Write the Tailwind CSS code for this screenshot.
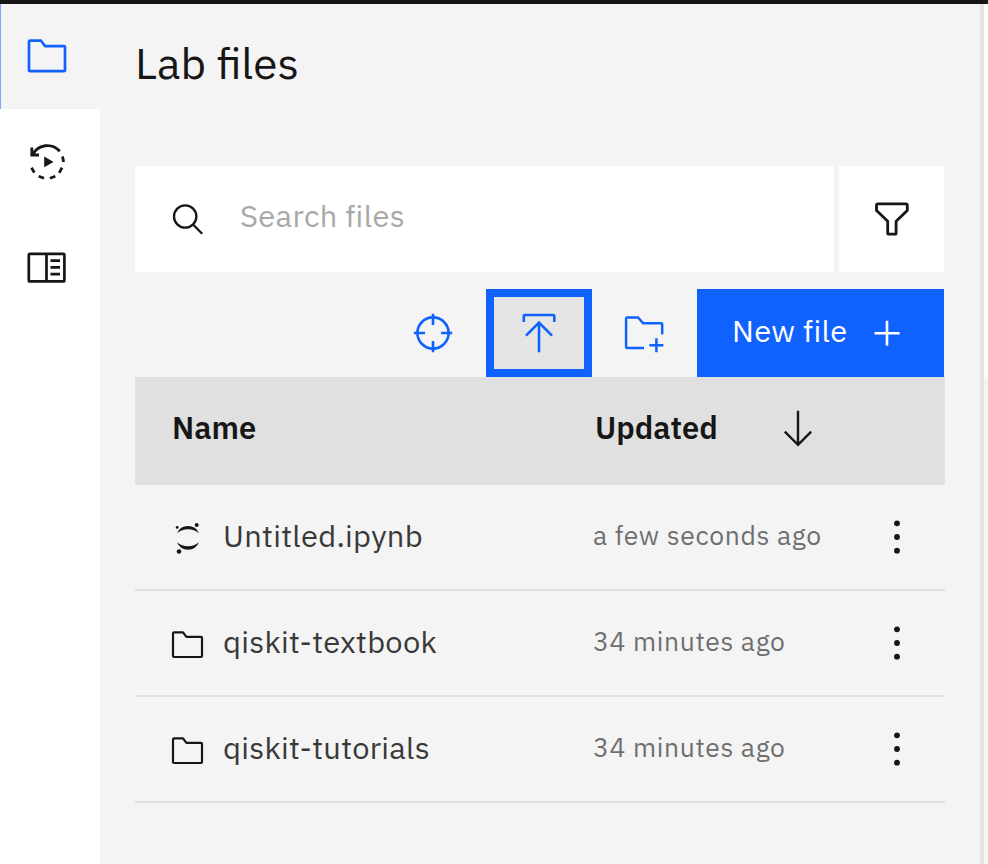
<!DOCTYPE html>
<html lang="en">
<head>
<meta charset="utf-8">
<title>Lab files</title>
<script src="https://cdn.jsdelivr.net/npm/@tailwindcss/browser@4"></script>
</head>
<body class="w-[988px] h-[864px] overflow-hidden bg-[#f4f4f4] font-['IBM_Plex_Sans',Roboto,sans-serif] text-[#161616]">
<div class="flex flex-col h-[864px]">
  <div class="h-1 bg-[#161616] shrink-0"></div>
  <div class="flex flex-1 min-h-0">
    <nav class="w-[100px] shrink-0 bg-white flex flex-col">
      <a class="h-[105px] bg-[#f4f4f4] border-l border-[#78a9ff] pl-[23px] pt-[30px] text-[#0f62fe]">
        <svg class="block" width="46" height="44" viewBox="24 34 46 44" fill="none" stroke="currentColor" stroke-width="2.7" stroke-linejoin="round"><path d="M30 40.7H41L45.2 46.2H64Q65 46.2 65 47.2V70.2Q65 71.2 64 71.2H30Q29 71.2 29 70.2V41.7Q29 40.7 30 40.7Z"/></svg>
      </a>
      <a class="h-[106px] pl-6 pt-[31px]">
        <svg class="block" width="46" height="44" viewBox="24 140 46 44" fill="none" stroke="currentColor" stroke-width="2.8"><path d="M31.8 147.5V155H39M32.4 155A16.6 16.6 0 0 1 59.8 151.2M62.4 156.4Q63.4 159 63.4 162M62 167.6L59.3 172.8M55.3 176.2L50 178.2M44 178.2L38.7 176.2M34.3 172.6L31.5 167.8"/><path d="M44.2 156.6V167.2L53.6 162Z" fill="currentColor" stroke="none"/></svg>
      </a>
      <a class="h-[106px] pl-6 pt-[31px]">
        <svg class="block" width="46" height="44" viewBox="24 246 46 44" fill="none" stroke="currentColor" stroke-width="2.7"><rect x="28.8" y="253.8" width="35.6" height="27.6" rx="1.2"/><path d="M46.5 253.6V281.2M50.5 260.7H60M50.5 267.4H60M50.5 274.2H60"/></svg>
      </a>
    </nav>
    <main class="w-[880px] shrink-0 pl-[35px]">
      <h1 class="h-[162px] pt-[33px] text-[44px] leading-[52px]">Lab files</h1>
      <div class="flex gap-[5px] h-[106px]">
        <label class="w-[699px] bg-white flex items-center pl-[33px]">
          <svg class="block" width="40" height="40" viewBox="168 199 40 40" fill="none" stroke="currentColor" stroke-width="2.3"><circle cx="185.2" cy="216.5" r="11.2"/><path d="M193 224.5L202.2 233.8"/></svg>
          <span class="ml-8 pb-2 text-[30.9px] leading-[40px] text-[#a8a8a8] tracking-[0.33px]">Search files</span>
        </label>
        <button class="w-[105px] bg-white flex items-center justify-center">
          <svg class="block" width="41" height="40" viewBox="871.1 199 41 40" fill="none" stroke="currentColor" stroke-width="2.8" stroke-linejoin="round"><path d="M878 203.8H906Q907.4 203.8 907.4 205.2V210.6L896.2 221.3V233Q896.2 234.2 895 234.2H889Q887.8 234.2 887.8 233V221.3L876.6 210.6V205.2Q876.6 203.8 878 203.8Z"/></svg>
        </button>
      </div>
      <div class="flex mt-[17px] h-[88px] w-[809px] justify-end text-[#0f62fe]">
        <button class="w-[106px] flex items-center justify-center">
          <svg class="block" width="44" height="44" viewBox="411 311 44 44" fill="none" stroke="currentColor" stroke-width="2.6"><circle cx="433" cy="333" r="15.6"/><path d="M433 313.8V325M433 341V352.2M413.8 333H425M441 333H452.2"/></svg>
        </button>
        <button class="w-[106px] flex items-center justify-center border-8 border-[#0f62fe] bg-[#e5e5e5]">
          <svg class="block" width="44" height="44" viewBox="517 311 44 44" fill="none" stroke="currentColor" stroke-width="2.6"><path d="M523.8 322V316Q523.8 315 524.8 315H553.3Q554.3 315 554.3 316V322M539 352.3V322.5M526 335.6L539 322.6L552 335.6"/></svg>
        </button>
        <button class="w-[105px] flex items-center justify-center">
          <svg class="block" width="44" height="44" viewBox="623 311 44 44" fill="none" stroke="currentColor" stroke-width="2.5"><path d="M644 348.1H627.3Q626.1 348.1 626.1 347V318.4Q626.1 317.4 627.3 317.4H638L643.2 323.3H661.2Q662.2 323.3 662.2 324.3V334.2M656.4 338.3V352.2M649.4 345.3H663.4"/></svg>
        </button>
        <button class="w-[247px] bg-[#0f62fe] text-white flex items-center pl-[35px]">
          <span class="w-[139px] text-left pb-[7px] text-[30.9px] leading-[40px] tracking-[0.35px]">New file</span>
          <svg class="block" width="32" height="32" viewBox="871 317 32 32" fill="none" stroke="currentColor" stroke-width="2.6"><path d="M887 320.7V345.8M874.5 333.3H899.6"/></svg>
        </button>
      </div>
      <div class="w-[810px]">
        <div class="h-[108px] bg-[#e0e0e0] flex items-center pl-[37px] text-[30.9px] leading-[40px] font-semibold">
          <span class="w-[423px] pb-2">Name</span>
          <span class="w-[183px] pb-2">Updated</span>
          <svg class="block" width="40" height="44" viewBox="778 409 40 44" fill="none" stroke="currentColor" stroke-width="2.4"><path d="M798 410.7V444.8M784.8 431.7L798 444.8L811.2 431.7"/></svg>
        </div>
        <div class="h-[106px] border-b-2 border-[#e0e0e0] flex items-center pl-[35px]">
          <svg class="block" width="36" height="40" viewBox="170 517 36 40" fill="currentColor"><path d="M177 533.3A11.9 11.9 0 0 1 199 533.3A17 17 0 0 0 177 533.3ZM177 542.3A11.9 11.9 0 0 0 199 542.3A17 17 0 0 1 177 542.3Z"/><circle cx="177.2" cy="527.4" r="1.4"/><circle cx="196.7" cy="525" r="2"/><circle cx="179" cy="551.5" r="2.3"/></svg>
          <span class="ml-[17px] w-[370px] pb-1 text-[30.9px] leading-[40px] text-[#393939] tracking-[0.28px]">Untitled.ipynb</span>
          <span class="w-[290px] pb-1 text-[26.5px] leading-[36px] text-[#6f6f6f] tracking-[0.64px]">a few seconds ago</span>
          <svg class="block" width="28" height="40" viewBox="883 517 28 40" fill="currentColor"><circle cx="897" cy="523.3" r="2.9"/><circle cx="897" cy="537" r="2.9"/><circle cx="897" cy="550.7" r="2.9"/></svg>
        </div>
        <div class="h-[106px] border-b-2 border-[#e0e0e0] flex items-center pl-[35px]">
          <svg class="block" width="36" height="40" viewBox="170 623 36 40" fill="none" stroke="currentColor" stroke-width="2.2" stroke-linejoin="round"><path d="M174 632.4H183L186.4 636.9H201Q202 636.9 202 637.9V656Q202 657 201 657H174Q173 657 173 656V633.4Q173 632.4 174 632.4Z"/></svg>
          <span class="ml-[17px] w-[370px] pb-1 text-[30.9px] leading-[40px] text-[#393939] tracking-[0.28px]">qiskit-textbook</span>
          <span class="w-[290px] pb-1 text-[26.5px] leading-[36px] text-[#6f6f6f] tracking-[0.64px]">34 minutes ago</span>
          <svg class="block" width="28" height="40" viewBox="883 517 28 40" fill="currentColor"><circle cx="897" cy="523.3" r="2.9"/><circle cx="897" cy="537" r="2.9"/><circle cx="897" cy="550.7" r="2.9"/></svg>
        </div>
        <div class="h-[106px] border-b-2 border-[#e0e0e0] flex items-center pl-[35px]">
          <svg class="block" width="36" height="40" viewBox="170 623 36 40" fill="none" stroke="currentColor" stroke-width="2.2" stroke-linejoin="round"><path d="M174 632.4H183L186.4 636.9H201Q202 636.9 202 637.9V656Q202 657 201 657H174Q173 657 173 656V633.4Q173 632.4 174 632.4Z"/></svg>
          <span class="ml-[17px] w-[370px] pb-1 text-[30.9px] leading-[40px] text-[#393939] tracking-[0.28px]">qiskit-tutorials</span>
          <span class="w-[290px] pb-1 text-[26.5px] leading-[36px] text-[#6f6f6f] tracking-[0.64px]">34 minutes ago</span>
          <svg class="block" width="28" height="40" viewBox="883 517 28 40" fill="currentColor"><circle cx="897" cy="523.3" r="2.9"/><circle cx="897" cy="537" r="2.9"/><circle cx="897" cy="550.7" r="2.9"/></svg>
        </div>
      </div>
    </main>
    <aside class="w-2 shrink-0 border-l-4 border-[#e4e4e4]">
      <div class="h-[373px] bg-white"></div>
    </aside>
  </div>
</div>
</body>
</html>
